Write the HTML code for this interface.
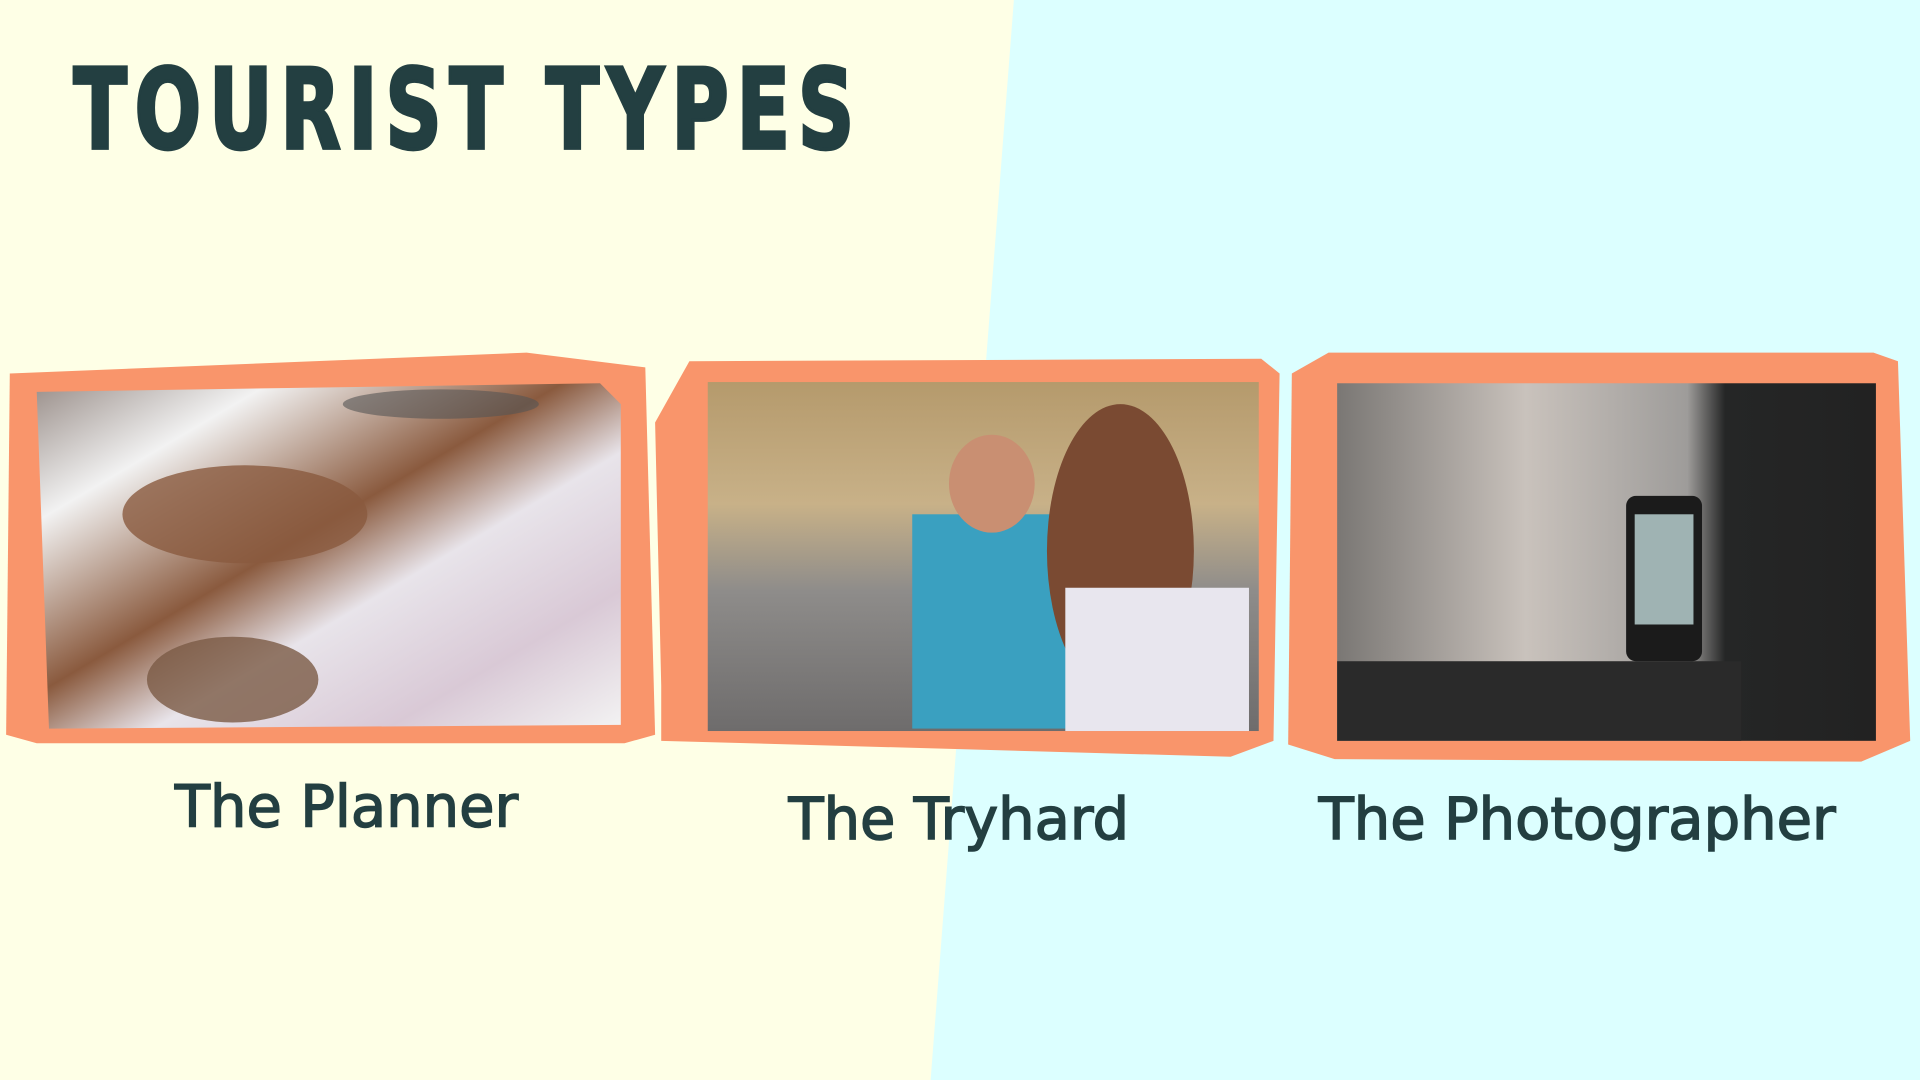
<!DOCTYPE html>
<html><head><meta charset="utf-8"><style>
html,body{margin:0;padding:0;width:1920px;height:1080px;overflow:hidden;background:#dcffff}
svg{display:block}
text{font-family:"DejaVu Sans","Liberation Sans",sans-serif;fill:#233f41}
</style></head><body>
<svg width="1920" height="1080" viewBox="0 0 1568 882" xmlns="http://www.w3.org/2000/svg">
<defs>
<linearGradient id="g1" x1="0" y1="0" x2="1" y2="1">
<stop offset="0" stop-color="#9a8f8a"/><stop offset="0.2" stop-color="#f2f2f2"/><stop offset="0.45" stop-color="#8a5a3e"/><stop offset="0.6" stop-color="#e8e4ea"/><stop offset="0.8" stop-color="#d9c9d6"/><stop offset="1" stop-color="#f3f3f3"/>
</linearGradient>
<linearGradient id="g2" x1="0" y1="0" x2="0" y2="1">
<stop offset="0" stop-color="#b59a6c"/><stop offset="0.35" stop-color="#c8b188"/><stop offset="0.6" stop-color="#8e8c8a"/><stop offset="1" stop-color="#6e6c6c"/>
</linearGradient>
<linearGradient id="g3" x1="0" y1="0" x2="1" y2="0">
<stop offset="0" stop-color="#7a7774"/><stop offset="0.35" stop-color="#c9c2bc"/><stop offset="0.65" stop-color="#9e9c9a"/><stop offset="0.72" stop-color="#252626"/><stop offset="1" stop-color="#222"/>
</linearGradient>
</defs>
<polygon points="0,0 828,0 760,882 0,882" fill="#feffe6"/>
<text x="60" y="121" font-size="90" font-weight="bold" letter-spacing="9" stroke="#233f41" stroke-width="3" textLength="644" lengthAdjust="spacingAndGlyphs">TOURIST TYPES</text>

<polygon points="8,305 430,288 527,300 535,600 510,607 30,607 5,600" fill="#f9956b"/>
<polygon points="30,320 490,313 507,330 507,592 40,595" fill="url(#g1)"/>
<ellipse cx="200" cy="420" rx="100" ry="40" fill="#8a5a3e" opacity="0.8"/>
<ellipse cx="190" cy="555" rx="70" ry="35" fill="#7a5a45" opacity="0.8"/>
<ellipse cx="360" cy="330" rx="80" ry="12" fill="#555" opacity="0.6"/>

<polygon points="535,345 563,295 1030,293 1045,305 1040,605 1005,618 540,605 540,560" fill="#f9956b"/>
<rect x="578" y="312" width="450" height="285" fill="url(#g2)"/>
<rect x="745" y="420" width="130" height="175" fill="#3aa0c0"/>
<ellipse cx="810" cy="395" rx="35" ry="40" fill="#c98f72"/>
<ellipse cx="915" cy="450" rx="60" ry="120" fill="#7a4a32"/>
<rect x="870" y="480" width="150" height="117" fill="#e8e6ee"/>

<polygon points="1055,305 1085,288 1530,288 1550,295 1560,605 1520,622 1090,620 1052,608" fill="#f9956b"/>
<rect x="1092" y="313" width="440" height="292" fill="url(#g3)"/>
<rect x="1092" y="540" width="330" height="65" fill="#2a2a2a"/>
<rect x="1328" y="405" width="62" height="135" rx="8" fill="#1b1b1b"/>
<rect x="1335" y="420" width="48" height="90" fill="#9fb3b3"/>

<g stroke="#233f41" stroke-width="1.2">
<text x="283" y="675" font-size="47" text-anchor="middle">The Planner</text>
<text x="783" y="685" font-size="47" text-anchor="middle">The Tryhard</text>
<text x="1288" y="685" font-size="47" text-anchor="middle">The Photographer</text>
</g>
</svg>
</body></html>
